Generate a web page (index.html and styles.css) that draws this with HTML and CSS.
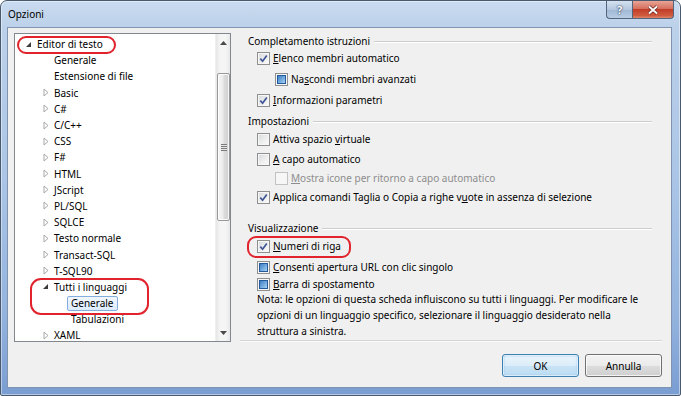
FILE: index.html
```html
<!DOCTYPE html>
<html lang="it">
<head>
<meta charset="utf-8">
<title>Opzioni</title>
<link rel="stylesheet" href="styles.css">
</head>
<body>
<div class="window">
  <div class="titlebar">
    <span class="title">Opzioni</span>
    <div class="caption">
      <span class="cap-btn help">?</span>
      <span class="cap-btn close">
        <svg width="12" height="10" viewBox="0 0 12 10"><path d="M2 1.5 L10 8.5 M10 1.5 L2 8.5" stroke="#6b2b24" stroke-width="3.4" fill="none"/><path d="M2 1.5 L10 8.5 M10 1.5 L2 8.5" stroke="#fff" stroke-width="1.8" fill="none"/></svg>
      </span>
    </div>
  </div>

  <div class="client">
    <div class="tree">
      <div class="tree-list">
        <div class="tn l1"><span class="exp"><svg width="7" height="7" viewBox="0 0 7 7"><path d="M6 1 L6 6 L1 6 Z" fill="#3b3b3b"/></svg></span><span class="lbl">Editor di testo</span></div>
        <div class="tn l2"><span class="exp"></span><span class="lbl">Generale</span></div>
        <div class="tn l2"><span class="exp"></span><span class="lbl">Estensione di file</span></div>
        <div class="tn l2"><span class="exp"><svg class="col" width="6" height="9" viewBox="0 0 6 9"><path d="M1 1 L5 4.5 L1 8 Z" fill="#fff" stroke="#a8a8a8"/></svg></span><span class="lbl">Basic</span></div>
        <div class="tn l2"><span class="exp"><svg class="col" width="6" height="9" viewBox="0 0 6 9"><path d="M1 1 L5 4.5 L1 8 Z" fill="#fff" stroke="#a8a8a8"/></svg></span><span class="lbl">C#</span></div>
        <div class="tn l2"><span class="exp"><svg class="col" width="6" height="9" viewBox="0 0 6 9"><path d="M1 1 L5 4.5 L1 8 Z" fill="#fff" stroke="#a8a8a8"/></svg></span><span class="lbl">C/C++</span></div>
        <div class="tn l2"><span class="exp"><svg class="col" width="6" height="9" viewBox="0 0 6 9"><path d="M1 1 L5 4.5 L1 8 Z" fill="#fff" stroke="#a8a8a8"/></svg></span><span class="lbl">CSS</span></div>
        <div class="tn l2"><span class="exp"><svg class="col" width="6" height="9" viewBox="0 0 6 9"><path d="M1 1 L5 4.5 L1 8 Z" fill="#fff" stroke="#a8a8a8"/></svg></span><span class="lbl">F#</span></div>
        <div class="tn l2"><span class="exp"><svg class="col" width="6" height="9" viewBox="0 0 6 9"><path d="M1 1 L5 4.5 L1 8 Z" fill="#fff" stroke="#a8a8a8"/></svg></span><span class="lbl">HTML</span></div>
        <div class="tn l2"><span class="exp"><svg class="col" width="6" height="9" viewBox="0 0 6 9"><path d="M1 1 L5 4.5 L1 8 Z" fill="#fff" stroke="#a8a8a8"/></svg></span><span class="lbl">JScript</span></div>
        <div class="tn l2"><span class="exp"><svg class="col" width="6" height="9" viewBox="0 0 6 9"><path d="M1 1 L5 4.5 L1 8 Z" fill="#fff" stroke="#a8a8a8"/></svg></span><span class="lbl">PL/SQL</span></div>
        <div class="tn l2"><span class="exp"><svg class="col" width="6" height="9" viewBox="0 0 6 9"><path d="M1 1 L5 4.5 L1 8 Z" fill="#fff" stroke="#a8a8a8"/></svg></span><span class="lbl">SQLCE</span></div>
        <div class="tn l2"><span class="exp"><svg class="col" width="6" height="9" viewBox="0 0 6 9"><path d="M1 1 L5 4.5 L1 8 Z" fill="#fff" stroke="#a8a8a8"/></svg></span><span class="lbl">Testo normale</span></div>
        <div class="tn l2"><span class="exp"><svg class="col" width="6" height="9" viewBox="0 0 6 9"><path d="M1 1 L5 4.5 L1 8 Z" fill="#fff" stroke="#a8a8a8"/></svg></span><span class="lbl">Transact-SQL</span></div>
        <div class="tn l2"><span class="exp"><svg class="col" width="6" height="9" viewBox="0 0 6 9"><path d="M1 1 L5 4.5 L1 8 Z" fill="#fff" stroke="#a8a8a8"/></svg></span><span class="lbl">T-SQL90</span></div>
        <div class="tn l2"><span class="exp"><svg width="7" height="7" viewBox="0 0 7 7"><path d="M6 1 L6 6 L1 6 Z" fill="#3b3b3b"/></svg></span><span class="lbl">Tutti i linguaggi</span></div>
        <div class="tn l3"><span class="exp"></span><span class="lbl selected">Generale</span></div>
        <div class="tn l3"><span class="exp"></span><span class="lbl">Tabulazioni</span></div>
        <div class="tn l2"><span class="exp"><svg class="col" width="6" height="9" viewBox="0 0 6 9"><path d="M1 1 L5 4.5 L1 8 Z" fill="#fff" stroke="#a8a8a8"/></svg></span><span class="lbl">XAML</span></div>
      </div>
      <div class="vscroll">
        <div class="sb-btn"><svg width="7" height="4" viewBox="0 0 7 4"><path d="M0 4 L3.5 0 L7 4 Z" fill="#4a4a4a"/></svg></div>
        <div class="sb-track">
          <div class="sb-thumb"><span class="grip"></span></div>
        </div>
        <div class="sb-btn"><svg width="7" height="4" viewBox="0 0 7 4"><path d="M0 0 L7 0 L3.5 4 Z" fill="#4a4a4a"/></svg></div>
      </div>
    </div>

    <div class="right">
      <div class="options">
        <div class="heading m1"><span>Completamento istruzioni</span><span class="rule"></span></div>
        <div class="opt m3"><span class="cb"><svg width="9" height="9" viewBox="0 0 9 9"><path d="M1.3 4.6 L3.6 7.2 L7.8 1.4" fill="none" stroke="#3f5596" stroke-width="1.7"/></svg></span><span><u>E</u>lenco membri automatico</span></div>
        <div class="opt sub m7"><span class="cb mixed"></span><span>Na<u>s</u>condi membri avanzati</span></div>
        <div class="opt m7"><span class="cb"><svg width="9" height="9" viewBox="0 0 9 9"><path d="M1.3 4.6 L3.6 7.2 L7.8 1.4" fill="none" stroke="#3f5596" stroke-width="1.7"/></svg></span><span><u>I</u>nformazioni parametri</span></div>
        <div class="heading m7"><span>Impostazioni</span><span class="rule"></span></div>
        <div class="opt m4"><span class="cb"></span><span>Attiva spazio <u>v</u>irtuale</span></div>
        <div class="opt m6"><span class="cb"></span><span><u>A</u> capo automatico</span></div>
        <div class="opt sub disabled m5"><span class="cb"></span><span><u>M</u>ostra icone per ritorno a capo automatico</span></div>
        <div class="opt m5"><span class="cb"><svg width="9" height="9" viewBox="0 0 9 9"><path d="M1.3 4.6 L3.6 7.2 L7.8 1.4" fill="none" stroke="#3f5596" stroke-width="1.7"/></svg></span><span>Applica comandi Taglia o Copia a righe v<u>u</u>ote in assenza di selezione</span></div>
        <div class="heading m17"><span>Visualizzazione</span><span class="rule"></span></div>
        <div class="opt m4"><span class="cb"><svg width="9" height="9" viewBox="0 0 9 9"><path d="M1.3 4.6 L3.6 7.2 L7.8 1.4" fill="none" stroke="#3f5596" stroke-width="1.7"/></svg></span><span><u>N</u>umeri di riga</span></div>
        <div class="opt m7"><span class="cb mixed"></span><span><u>C</u>onsenti apertura URL con clic singolo</span></div>
        <div class="opt m3"><span class="cb mixed"></span><span><u>B</u>arra di spostamento</span></div>
        <p class="note">Nota: le opzioni di questa scheda influiscono su tutti i linguaggi. Per modificare le<br>opzioni di un linguaggio specifico, selezionare il linguaggio desiderato nella<br>struttura a sinistra.</p>
      </div>
      <div class="sep"></div>
      <div class="buttons">
        <button class="btn default">OK</button>
        <button class="btn">Annulla</button>
      </div>
    </div>
  </div>

  <span class="mark mark-editor"></span>
  <span class="mark mark-tutti"></span>
  <span class="mark mark-numeri"></span>
</div>
</body>
</html>
```

FILE: styles.css
```css
* { box-sizing: border-box; }

html, body {
  margin: 0;
  padding: 0;
  background: #ffffff;
}

body {
  font-family: "Noto Sans", "Open Sans", sans-serif;
  font-size: 10px;
  color: #000;
}

.window {
  position: relative;
  width: 681px;
  height: 396px;
  border: 1px solid #4a5a6e;
  border-radius: 7px 7px 2px 2px;
  background: linear-gradient(180deg, #c9dbef 0px, #bcd1ea 26px, #aac5e6 45%, #93b3de 80%, #7a9dd2 100%);
  box-shadow: inset 0 0 0 1px rgba(255, 255, 255, 0.45);
  padding: 0 8px 7px 6px;
  display: flex;
  flex-direction: column;
}

/* ---------- title bar ---------- */
.titlebar {
  height: 26px;
  display: flex;
  align-items: flex-start;
  flex: none;
}

.title {
  line-height: 26px;
  padding-left: 1px;
  color: #000;
}

.caption {
  margin-left: auto;
  margin-right: -2px;
  display: flex;
  height: 18px;
}

.cap-btn {
  height: 18px;
  display: flex;
  align-items: center;
  justify-content: center;
  border: 1px solid #53647b;
  border-top: none;
}

.help {
  width: 26px;
  border-right: none;
  border-radius: 0 0 0 4px;
  background: linear-gradient(180deg, #d4e1f0 0%, #b4c8e0 50%, #9fb7d4 51%, #b9cde4 100%);
  color: #fff;
  font-weight: bold;
  font-size: 11px;
  text-shadow: 0 0 2px #23364f, 0 0 1px #23364f;
}

.close {
  width: 42px;
  border-radius: 0 0 4px 0;
  background: linear-gradient(180deg, #e8a394 0%, #d5705f 45%, #c23e28 50%, #cf5a3e 85%, #e0866a 100%);
}

/* ---------- client area ---------- */
.client {
  flex: 1;
  display: flex;
  gap: 9px;
  padding: 5px 9px 0 6px;
  background: #f0f0f0;
  border: 1px solid #8094b0;
}

/* ---------- tree ---------- */
.tree {
  width: 217px;
  height: 309px;
  flex: none;
  display: flex;
  background: #fff;
  border: 1px solid #828790;
}

.tree-list {
  flex: 1;
  overflow: hidden;
  padding-top: 2px;
}

.tn {
  height: 16.2px;
  display: flex;
  align-items: center;
  white-space: nowrap;
}

.tn.l1 { padding-left: 9px; }
.tn.l2 { padding-left: 26px; }
.tn.l3 { padding-left: 43px; }

.exp {
  width: 13px;
  height: 16px;
  flex: none;
  display: flex;
  align-items: center;
  padding-left: 1px;
}

.exp .col {
  margin-left: 1px;
}

.lbl {
  line-height: 16px;
}

.lbl.selected {
  margin-left: -4px;
  padding: 0 3px;
  line-height: 13px;
  border: 1px solid #84acdd;
  border-radius: 2px;
  background: linear-gradient(180deg, #f1f7fe 0%, #dcebfc 100%);
}

/* scrollbar */
.vscroll {
  width: 15px;
  flex: none;
  display: flex;
  flex-direction: column;
  background: linear-gradient(90deg, #e6e6e6 0%, #f5f5f5 30%, #f5f5f5 70%, #e8e8e8 100%);
  border-left: 1px solid #efefef;
}

.sb-btn {
  height: 17px;
  display: flex;
  align-items: center;
  justify-content: center;
}

.sb-track {
  flex: 1;
  padding-top: 22px;
}

.sb-thumb {
  height: 148px;
  margin: 0 0 0 1px;
  border: 1px solid #999;
  border-radius: 2px;
  background: linear-gradient(90deg, #f6f6f6 0%, #ececec 45%, #dcdcdc 55%, #cfcfcf 100%);
  box-shadow: inset 0 0 0 1px rgba(255, 255, 255, 0.8);
  display: flex;
  align-items: center;
  justify-content: center;
}

.grip {
  width: 6px;
  height: 7px;
  background: repeating-linear-gradient(180deg, #7a7a7a 0px, #7a7a7a 1px, #e8e8e8 1px, #e8e8e8 2px);
}

/* ---------- right panel ---------- */
.right {
  width: 422px;
  flex: none;
  display: flex;
  flex-direction: column;
}

.heading {
  height: 14px;
  display: flex;
  align-items: center;
  padding-left: 8px;
  margin-right: 10px;
  white-space: nowrap;
}

.rule {
  flex: 1;
  margin-left: 4px;
  margin-top: 2px;
  height: 2px;
  border-top: 1px solid #cdcdcd;
  border-bottom: 1px solid #ffffff;
}

.opt {
  height: 14px;
  display: flex;
  align-items: center;
  padding-left: 17px;
  white-space: nowrap;
}

.opt.sub { padding-left: 35px; }

.opt.disabled { color: #8d8d8d; }

.m1 { margin-top: 1px; }
.m3 { margin-top: 3px; }
.m4 { margin-top: 4px; }
.m5 { margin-top: 5px; }
.m6 { margin-top: 6px; }
.m7 { margin-top: 7px; }
.m17 { margin-top: 17px; }

.cb {
  width: 13px;
  height: 13px;
  flex: none;
  margin-right: 3px;
  border: 1px solid #8e8f8f;
  background: linear-gradient(135deg, #d6d8dc 0%, #eeeeee 55%, #fbfbfb 100%);
  box-shadow: inset 0 0 0 1px #f6f6f6;
  display: flex;
  align-items: center;
  justify-content: center;
}

.cb.mixed::after {
  content: "";
  width: 7px;
  height: 7px;
  border: 1px solid #245a9c;
  background: linear-gradient(135deg, #3e7fc4 0%, #79b0e2 60%, #a9d0f2 100%);
}

.opt.disabled .cb {
  border-color: #c2c2c2;
  background: #f7f7f7;
}

.note {
  margin: 0;
  padding-left: 17px;
  line-height: 16px;
  white-space: nowrap;
}

.sep {
  margin-top: 1px;
  height: 2px;
  border-top: 1px solid #d5d5d5;
  border-bottom: 1px solid #fbfbfb;
}

.buttons {
  margin-top: 12px;
  display: flex;
  justify-content: flex-end;
  gap: 6px;
}

.btn {
  width: 77px;
  height: 23px;
  padding: 0;
  font-family: inherit;
  font-size: 10px;
  color: #000;
  border: 1px solid #707070;
  border-radius: 3px;
  background: linear-gradient(180deg, #f3f3f3 0%, #ebebeb 50%, #dddddd 51%, #cfcfcf 100%);
  box-shadow: inset 0 0 0 1px rgba(255, 255, 255, 0.75);
}

.btn.default {
  border-color: #3c7fb1;
  background: linear-gradient(180deg, #eaf5fc 0%, #dcedf9 50%, #c9e3f6 51%, #bcdcf3 100%);
  box-shadow: inset 0 0 0 1px rgba(255, 255, 255, 0.6), inset 0 0 2px 1px #9ccbef;
}

/* ---------- annotation marks ---------- */
.mark {
  position: absolute;
  border: 2px solid #e0232c;
  pointer-events: none;
}

.mark-editor {
  left: 16px;
  top: 35px;
  width: 99px;
  height: 18px;
  border-radius: 9px;
}

.mark-tutti {
  left: 29px;
  top: 277px;
  width: 119px;
  height: 37px;
  border-radius: 11px;
}

.mark-numeri {
  left: 246px;
  top: 235px;
  width: 104px;
  height: 22px;
  border-radius: 9px;
}
```
